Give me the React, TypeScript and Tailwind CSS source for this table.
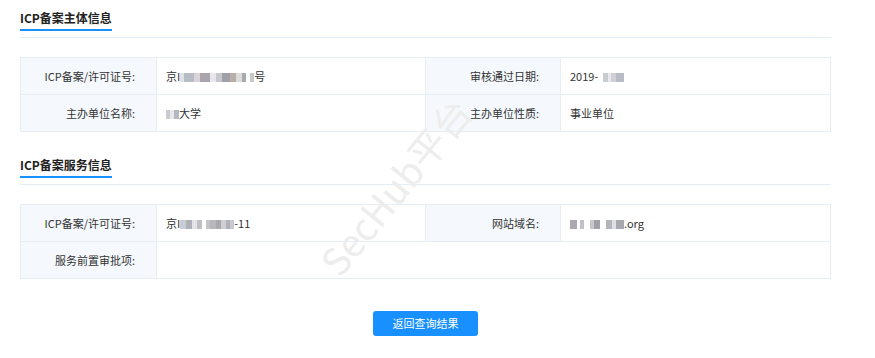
import * as React from 'react';

// pixelated "mosaic" stand-ins for the blurred parts of the screenshot
function Mosaic({ cells }: { cells: [number, string][] }) {
  return (
    <span className="inline-flex items-center align-middle h-[12px]">
      {cells.map(([w, c], i) => (
        <span key={i} className="inline-block h-[9px]" style={{ width: w, background: c }} />
      ))}
    </span>
  );
}

function SectionTitle({ text }: { text: string }) {
  return (
    <div className="flex border-b border-[#e3edf6]">
      <span className="text-[12px] leading-[18px] font-bold text-[#222] border-b-2 border-[#1890ff] pb-[2px] mb-[6px]">
        {text}
      </span>
    </div>
  );
}

const label = 'bg-[#f5f9fd] border border-[#e6edf3] text-right pr-[21px] text-[11px] text-[#333] h-[37px]';
const value = 'border border-[#e6edf3] pl-[9px] text-[11px] text-[#333] h-[37px]';

export default function App() {
  return (
    <div
      className="relative w-[875px] h-[358px] bg-white overflow-hidden px-5 pt-[9px]"
      style={{ fontFamily: '"Noto Sans CJK SC", "Noto Sans", sans-serif' }}
    >
      <div className="w-[811px]">
        <SectionTitle text="ICP备案主体信息" />
        <table className="w-full border-collapse mt-[19px] table-fixed">
          <colgroup>
            <col className="w-[136px]" />
            <col className="w-[269px]" />
            <col className="w-[135px]" />
            <col />
          </colgroup>
          <tbody>
            <tr>
              <td className={label}>ICP备案/许可证号:</td>
              <td className={value}>
                京I
                <Mosaic cells={[[4, '#dfe3e8'], [10, '#b8bcc4'], [6, '#d8d4d8'], [10, '#aaa4ac'], [6, '#e8e8ec'], [6, '#c8c8cc'], [8, '#a0a0a8'], [6, '#b8b0a8'], [6, '#dcdcdc'], [4, '#a8a8b0'], [4, '#ffffff'], [4, '#c8c8c8']]} />
                号
              </td>
              <td className={label}>审核通过日期:</td>
              <td className={value}>
                2019-
                <Mosaic cells={[[5, '#ffffff'], [5, '#c8cbd0'], [3, '#e8e8ec'], [5, '#d0d0d4'], [8, '#b8bcc4']]} />
              </td>
            </tr>
            <tr>
              <td className={label}>主办单位名称:</td>
              <td className={value}>
                <Mosaic cells={[[4, '#c8ccd2'], [4, '#e8e8ec'], [5, '#b4b8c0']]} />
                大学
              </td>
              <td className={label}>主办单位性质:</td>
              <td className={value}>事业单位</td>
            </tr>
          </tbody>
        </table>

        <div className="mt-[24px]">
          <SectionTitle text="ICP备案服务信息" />
        </div>
        <table className="w-full border-collapse mt-[19px] table-fixed">
          <colgroup>
            <col className="w-[136px]" />
            <col className="w-[269px]" />
            <col className="w-[135px]" />
            <col />
          </colgroup>
          <tbody>
            <tr>
              <td className={label}>ICP备案/许可证号:</td>
              <td className={value}>
                京I
                <Mosaic cells={[[6, '#c8ccd4'], [6, '#b0b0b8'], [5, '#e4e4e8'], [5, '#c0c0c4'], [4, '#ffffff'], [4, '#c4c4c8'], [6, '#b8b8bc'], [5, '#a8a8b0'], [5, '#d0d0d4'], [4, '#b0b0b8'], [4, '#c8c8d0']]} />
                -11
              </td>
              <td className={label}>网站域名:</td>
              <td className={value}>
                <Mosaic cells={[[7, '#aca8b0'], [3, '#ffffff'], [4, '#c0c0c8'], [6, '#ffffff'], [4, '#c8c8cc'], [6, '#a0a0a8'], [6, '#ffffff'], [6, '#b4b4bc'], [4, '#e0e0e4'], [8, '#a8a8b0']]} />
                .org
              </td>
            </tr>
            <tr>
              <td className={label}>服务前置审批项:</td>
              <td className={value} colSpan={3}></td>
            </tr>
          </tbody>
        </table>

        <div className="flex justify-center mt-[32px]">
          <button className="w-[105px] h-[25px] rounded-[3px] bg-[#1890ff] text-white text-[11px] leading-[25px]">
            返回查询结果
          </button>
        </div>
      </div>

      {/* watermark */}
      <div className="absolute left-[263px] top-[158px] w-[264px] text-center leading-[56px] -rotate-[51deg] text-[38px] text-[#ededed] pointer-events-none select-none whitespace-nowrap">
        SecHub平台
      </div>
    </div>
  );
}
